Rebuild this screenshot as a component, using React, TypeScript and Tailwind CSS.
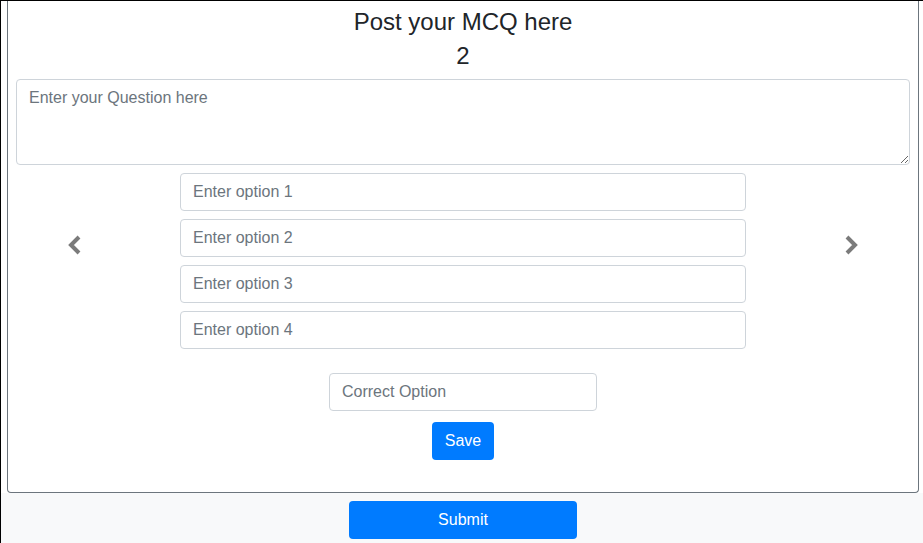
import React from "react";

const inputCls =
    "block w-full h-[38px] px-3 border border-[#ced4da] rounded bg-white text-base text-[#495057] placeholder:text-[#6c757d] outline-none";

function Chevron({ dir }: { dir: "left" | "right" }) {
    const points = dir === "left" ? "12,2 4,10 12,18" : "4,2 12,10 4,18";
    return (
        <svg width="16" height="20" viewBox="0 0 16 20" className="block">
            <polyline points={points} fill="none" stroke="#7b7b7b" strokeWidth="4" strokeLinejoin="miter" />
        </svg>
    );
}

export default function App() {
    const options = [1, 2, 3, 4];

    return (
        <div className="w-[923px] h-[543px] overflow-hidden border-l border-t border-black bg-white font-['Liberation_Sans',Arial,sans-serif] text-[#212529]">
            <div className="pl-[6px] pr-[4px] bg-white">
                <div className="border-x border-b border-[#6c757d] rounded-b h-[492px] px-2 pt-[7px]">
                    <h4 className="text-2xl leading-[1.2] text-center mb-[5px]">Post your MCQ here</h4>
                    <h4 className="text-2xl leading-[1.2] text-center mb-[8px]">2</h4>
                    <textarea
                        placeholder="Enter your Question here"
                        className="block w-full h-[86px] px-3 py-[6px] border border-[#ced4da] rounded text-base leading-normal text-[#495057] placeholder:text-[#6c757d] outline-none"
                    />
                    <div className="flex mt-2">
                        <div className="w-[164px] pl-[51px] pt-[62px]">
                            <Chevron dir="left" />
                        </div>
                        <div className="flex-1 flex flex-col gap-2">
                            {options.map(n => (
                                <input key={n} placeholder={`Enter option ${n}`} className={inputCls} />
                            ))}
                        </div>
                        <div className="w-[164px] pr-[51px] pt-[62px] flex justify-end">
                            <Chevron dir="right" />
                        </div>
                    </div>
                    <div className="flex flex-col items-center mt-6">
                        <input placeholder="Correct Option" className={`${inputCls} !w-[268px]`} />
                        <button className="mt-[11px] h-[38px] px-[13px] rounded bg-[#007bff] text-white text-base">Save</button>
                    </div>
                </div>
            </div>
            <div className="pl-[6px] pr-[4px] bg-[#f8f9fa] h-[50px] pt-2 flex justify-center">
                <button className="w-[228px] h-[38px] rounded bg-[#007bff] text-white text-base">Submit</button>
            </div>
        </div>
    );
}
